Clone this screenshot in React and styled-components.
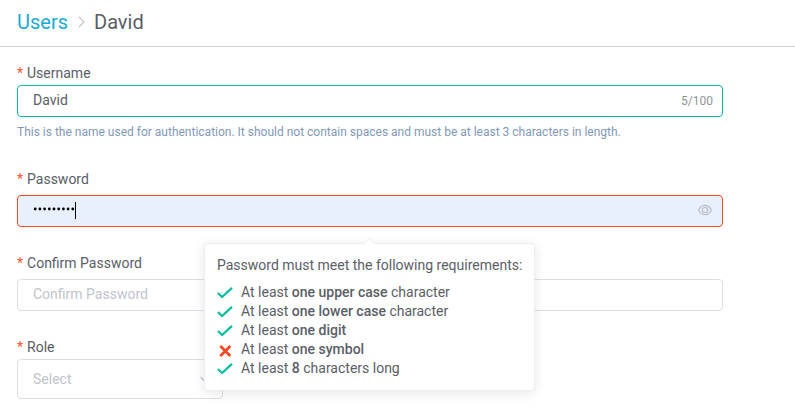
import React from "react";
import styled, { createGlobalStyle } from "styled-components";

const GlobalStyle = createGlobalStyle`
  * { box-sizing: border-box; }
  body {
    margin: 0;
    background: #fff;
    color: #5a5e66;
    font-family: Roboto, "Liberation Sans", sans-serif;
    font-size: 14px;
    overflow: hidden;
  }
`;

const Page = styled.div`
  width: 795px;
  height: 412px;
  overflow: hidden;
`;

const Breadcrumb = styled.header`
  display: flex;
  align-items: center;
  height: 47px;
  padding: 0 17px 3px;
  border-bottom: 1px solid #ccd3e4;
  font-size: 20px;
  line-height: 24px;
`;

const CrumbLink = styled.a`
  color: #1ba9d4;
`;

const CrumbArrow = styled.svg`
  width: 7px;
  height: 12px;
  margin: 0 9px 0 10px;
  fill: none;
  stroke: #c0c4cc;
  stroke-width: 1.2;
`;

const Form = styled.form`
  display: flex;
  flex-direction: column;
  width: 706px;
  margin: 14px 0 0 17px;
`;

const Field = styled.div`
  display: flex;
  flex-direction: column;
  height: ${(p) => p.$height}px;
`;

const Label = styled.label`
  height: 24px;
  line-height: 24px;
  margin-bottom: ${(p) => p.$gap || 0}px;

  &::before {
    content: "*";
    color: #fa5534;
    margin-right: 4px;
  }
`;

const borders = { success: "#0bbca2", error: "#f9481f", idle: "#dcdfe6" };

const Control = styled.div`
  position: relative;
  display: flex;
  align-items: center;
  justify-content: space-between;
  width: ${(p) => p.$width || "100%"};
  height: ${(p) => p.$height || 32}px;
  flex-shrink: 0;
  padding: 0 9px ${(p) => (p.$height ? 0 : 2)}px 15px;
  border: 1px solid ${(p) => borders[p.$state || "idle"]};
  border-radius: 4px;
  background: ${(p) => (p.$filled ? "#e8f0fe" : "#fff")};
`;

const Placeholder = styled.span`
  color: #c0c4cc;
`;

const Counter = styled.span`
  color: #909399;
  font-size: 12px;
  padding-top: 2px;
`;

const Help = styled.p`
  margin: 5px 0 0;
  color: #8299b8;
  font-size: 12px;
  line-height: 20px;
`;

const Secret = styled.span`
  display: flex;
  align-items: center;
`;

const Dots = styled.svg`
  width: 42px;
  height: 4px;
  margin-bottom: 2px;
  fill: #000;
`;

const Caret = styled.span`
  width: 1px;
  height: 17px;
  margin-top: 1px;
  background: #000;
`;

const Eye = styled.svg`
  width: 14px;
  height: 12px;
  margin-right: 1px;
  fill: none;
  stroke: #bcc0c8;
  stroke-width: 1.25;
`;

const Chevron = styled.svg`
  width: 10px;
  height: 7px;
  margin-right: 3px;
  fill: none;
  stroke: #c0c4cc;
  stroke-width: 1.2;
`;

const Popover = styled.aside`
  position: absolute;
  z-index: 2;
  left: 186px;
  top: 47px;
  width: 331px;
  height: 148px;
  padding: 12px;
  border: 1px solid #ebeef5;
  border-radius: 4px;
  background: #fff;
  box-shadow: 0 2px 12px rgba(0, 0, 0, 0.1);
  line-height: 19px;
  white-space: nowrap;
`;

const PopoverArrow = styled.svg`
  position: absolute;
  left: 158px;
  top: -6px;
  width: 12px;
  height: 7px;
  fill: #fff;
  stroke: #ebeef5;
`;

const Rules = styled.ul`
  list-style: none;
  margin: 8px 0 0;
  padding: 0;
`;

const Rule = styled.li`
  display: flex;
  align-items: center;
  height: 19px;

  b { font-weight: 500; }
`;

const RuleIcon = styled.svg`
  width: 16px;
  height: 14px;
  margin-right: 8px;
  fill: none;
  stroke: ${(p) => (p.$ok ? "#0ebca2" : "#f9481f")};
  stroke-width: ${(p) => (p.$ok ? 2.3 : 2.8)};
`;

const rules = [
  { ok: true, strong: "one upper case", rest: " character" },
  { ok: true, strong: "one lower case", rest: " character" },
  { ok: true, strong: "one digit", rest: "" },
  { ok: false, strong: "one symbol", rest: "" },
  { ok: true, strong: "8", rest: " characters long" },
];

function Requirements() {
  return (
    <Popover>
      <PopoverArrow viewBox="0 0 12 7">
        <path d="M0 6.5 6 .7l6 5.8" />
        <path d="M.8 7h10.4" stroke="#fff" />
      </PopoverArrow>
      Password must meet the following requirements:
      <Rules>
        {rules.map((r) => (
          <Rule key={r.strong}>
            <RuleIcon $ok={r.ok} viewBox="0 0 16 14">
              <path d={r.ok ? "M.9 7 5.1 11 15 1.9" : "M3.3 2.9 13.3 12.9M13.3 2.9 3.3 12.9"} />
            </RuleIcon>
            <span>At least <b>{r.strong}</b>{r.rest}</span>
          </Rule>
        ))}
      </Rules>
    </Popover>
  );
}

export default function App() {
  return (
    <Page>
      <GlobalStyle />
      <Breadcrumb>
        <CrumbLink>Users</CrumbLink>
        <CrumbArrow viewBox="0 0 7 12"><path d="m1 1 5 5-5 5" /></CrumbArrow>
        <span>David</span>
      </Breadcrumb>
      <Form>
        <Field $height={106}>
          <Label>Username</Label>
          <Control $state="success">
            <span>David</span>
            <Counter>5/100</Counter>
          </Control>
          <Help>This is the name used for authentication. It should not contain spaces and must be at least 3 characters in length.</Help>
        </Field>
        <Field $height={84}>
          <Label $gap={4}>Password</Label>
          <Control $state="error" $filled>
            <Secret>
              <Dots viewBox="0 0 42 4">
                {Array.from({ length: 9 }, (_, i) => (
                  <circle key={i} cx={2.2 + i * 4.7} cy="2" r="1.4" />
                ))}
              </Dots>
              <Caret />
            </Secret>
            <Eye viewBox="0 0 14 12">
              <path d="M.6 6C3.4-.3 10.6-.3 13.4 6 10.6 12.3 3.4 12.3.6 6Z" />
              <circle cx="7" cy="6" r="2.7" />
            </Eye>
            <Requirements />
          </Control>
        </Field>
        <Field $height={84}>
          <Label $gap={4}>Confirm Password</Label>
          <Control><Placeholder>Confirm Password</Placeholder></Control>
        </Field>
        <Field $height={64}>
          <Label>Role</Label>
          <Control $width="206px" $height={40}>
            <Placeholder>Select</Placeholder>
            <Chevron viewBox="0 0 10 7"><path d="m.8 1 4.2 4.5L9.2 1" /></Chevron>
          </Control>
        </Field>
      </Form>
    </Page>
  );
}
